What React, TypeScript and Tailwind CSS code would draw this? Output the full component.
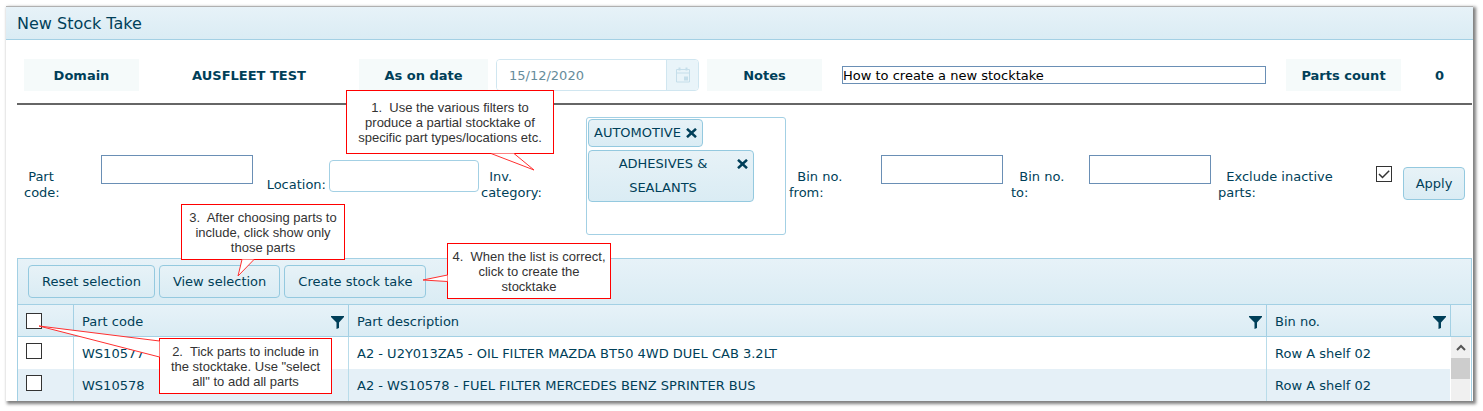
import React, { useState } from 'react';

interface Part {
  code: string;
  description: string;
  bin: string;
}

const parts: Part[] = [
  { code: 'WS10577', description: 'A2 - U2Y013ZA5 - OIL FILTER MAZDA BT50 4WD DUEL CAB 3.2LT', bin: 'Row A shelf 02' },
  { code: 'WS10578', description: 'A2 - WS10578 - FUEL FILTER MERCEDES BENZ SPRINTER BUS', bin: 'Row A shelf 02' },
];

const FilterIcon: React.FC = () => (
  <svg className="w-[13px] h-[13px] shrink-0" viewBox="0 0 13 13" fill="#003f59">
    <path d="M0 0h13v1L8 6.5V12L5.500 13V6.500L0 1z" />
  </svg>
);

const CrossIcon: React.FC = () => (
  <svg className="w-[11px] h-[10px]" viewBox="0 0 11 10" fill="none" stroke="#003f59" strokeWidth="2.500">
    <path d="M1 .8l9 8.400M10 .8L1 9.200" />
  </svg>
);

const CalendarIcon: React.FC = () => (
  <svg className="w-4 h-4" viewBox="0 0 16 16" fill="none" stroke="#c5deea">
    <path d="M1.500 2.500h13v12.500h-13zM1.500 6h13" />
    <path d="M4.500 .5v3M11.500 .5v3" strokeWidth="2" />
    <path d="M9 9.500h4v4H9z" fill="#c5deea" stroke="none" />
  </svg>
);

const Checkbox: React.FC<{ id: string; label?: string; initial?: boolean }> = ({ id, label, initial = false }) => {
  const [checked, setChecked] = useState(initial);
  return (
    <span className="relative block w-4 h-4">
      <input
        id={id}
        type="checkbox"
        aria-label={label}
        checked={checked}
        onChange={(e) => setChecked(e.target.checked)}
        className="block appearance-none w-4 h-4 bg-white border border-[#333333]"
      />
      {checked && (
        <svg className="absolute inset-0 w-4 h-4 pointer-events-none" viewBox="0 0 16 16" fill="none" stroke="#333333" strokeWidth="1.500">
          <path d="M3 8l3.500 3.500L13.200 4.800" />
        </svg>
      )}
    </span>
  );
};

const buttonStyle =
  'h-[33px] whitespace-nowrap border border-[#94c9df] rounded bg-linear-to-b from-[#e7f2f7] to-[#daecf4] hover:to-[#c4e0ed]';

const ToolButton: React.FC<{ children: React.ReactNode }> = ({ children }) => (
  <button className={`${buttonStyle} px-[13px]`}>{children}</button>
);

const Callout: React.FC<{ className: string; tail: string; children: React.ReactNode }> = ({ className, tail, children }) => (
  <div className={`absolute flex items-center justify-center border border-[#ff0000] bg-white font-['Liberation_Sans',sans-serif] text-[13px] leading-[15px] text-center whitespace-nowrap text-[#333333] ${className}`}>
    <svg className="absolute -left-px -top-px w-1 h-1 overflow-visible" fill="white" stroke="#ff3030" strokeWidth="1">
      <path d={tail} />
    </svg>
    <p className="relative">{children}</p>
  </div>
);

const headLabel = 'flex items-center justify-center h-8 pt-0.5 bg-[#f5fafa] font-bold whitespace-nowrap';
const filterLabel = 'mt-[52px] leading-4';
const plainInput = 'mt-[38px] w-full min-w-0 h-[29px] px-1 border border-[#6a8fb5] bg-white';
const headCell = 'h-8 px-2 border-b border-l border-[#a3d0e4] font-normal text-left';
const bodyCell = 'h-8 px-2 pt-0.5 border-l border-[#b9dcea]';

const App: React.FC = () => {
  const [notes, setNotes] = useState('How to create a new stocktake');
  const [categories, setCategories] = useState(['AUTOMOTIVE', 'ADHESIVES & SEALANTS']);

  return (
    <div className="relative bg-white pt-1.5 pl-1.5 pr-[10px] pb-[10px] font-['DejaVu_Sans',sans-serif] text-[13px] text-[#003f59]">
      <main className="border-t border-[#b0b0b0] bg-white shadow-[2px_2px_3px_1px_rgba(0,0,0,0.5)]">
        <h1 className="h-[33px] pt-0.5 px-[11px] flex items-center text-base border-b border-[#a3d0e4] bg-linear-to-b from-[#e7f2f8] to-[#daecf4]">
          New Stock Take
        </h1>

        <div className="pl-[11px] pr-px pt-[19px]">
          <section className="pl-[7px] pb-3 border-b-2 border-[#666666] grid grid-cols-[115fr_220fr_129fr_219fr_115fr_464fr_115fr_71fr] items-center">
            <div className={headLabel}>Domain</div>
            <div className="pt-0.5 text-center font-bold">AUSFLEET TEST</div>
            <label htmlFor="as-on" className={headLabel}>As on date</label>
            <div className="mx-2 h-8 flex border border-[#d0e6f0] rounded overflow-hidden">
              <input id="as-on" className="flex-1 min-w-0 px-3 pt-0.5 text-[#668c9b] bg-white" defaultValue="15/12/2020" disabled />
              <button aria-label="Open calendar" disabled className="w-8 flex items-center justify-center border-l border-[#d0e6f0] bg-[#e9f4f9]">
                <CalendarIcon />
              </button>
            </div>
            <label htmlFor="notes" className={headLabel}>Notes</label>
            <input
              id="notes"
              value={notes}
              onChange={(e) => setNotes(e.target.value)}
              className="mx-5 min-w-0 h-[18px] pt-px border border-[#6a8fb5] text-black"
            />
            <div className={headLabel}>Parts count</div>
            <div className="pl-1.5 pt-0.5 text-center font-bold">0</div>
          </section>

          <section className="pt-3 pl-[7px] pr-[7px] pb-[23px] grid grid-cols-[77fr_152fr_76fr_150fr_107fr_200fr_95fr_122fr_86fr_122fr_165fr_27fr_62fr] items-start">
            <label htmlFor="part-code" className={filterLabel}>&nbsp;Part<br />code:</label>
            <input id="part-code" className={plainInput} />
            <label htmlFor="location" className="mt-[60px] pr-[3px] leading-4 text-right">Location:</label>
            <input id="location" className="mt-[43px] w-full min-w-0 h-8 px-2 border border-[#a3d0e4] rounded bg-white" />
            <div className={`${filterLabel} pl-0.5`}>&nbsp; Inv.<br />category:</div>
            <div className="h-[118px] p-px border border-[#a3d0e4] rounded-[3px] flex flex-col items-start gap-[3px]">
              {categories.map((name) => (
                <span key={name} className="max-w-[166px] px-[5px] py-px flex items-start border border-[#94c9df] rounded bg-linear-to-b from-[#e7f2f7] to-[#daecf4] leading-6 text-center">
                  {name}
                  <button
                    aria-label={`Remove ${name}`}
                    className="h-6 pl-[5px] flex items-center"
                    onClick={() => setCategories(categories.filter((c) => c !== name))}
                  >
                    <CrossIcon />
                  </button>
                </span>
              ))}
            </div>
            <label htmlFor="bin-from" className={`${filterLabel} pl-[3px]`}>&nbsp; Bin no.<br />from:</label>
            <input id="bin-from" className={plainInput} />
            <label htmlFor="bin-to" className={`${filterLabel} pl-2`}>&nbsp; Bin no.<br />to:</label>
            <input id="bin-to" className={plainInput} />
            <label htmlFor="inactive" className={`${filterLabel} pl-[7px]`}>&nbsp; Exclude inactive<br />parts:</label>
            <div className="mt-[49px]"><Checkbox id="inactive" initial /></div>
            <button className={`${buttonStyle} mt-[50px] w-full`}>Apply</button>
          </section>

          <section className="border border-b-0 border-[#a3d0e4]">
            <div className="h-[46px] pl-[10px] flex items-center gap-1 border-b border-[#a3d0e4] bg-linear-to-b from-[#e7f2f8] to-[#daecf4]">
              <ToolButton>Reset selection</ToolButton>
              <ToolButton>View selection</ToolButton>
              <ToolButton>Create stock take</ToolButton>
            </div>
            <div className="flex">
              <table className="flex-1 table-fixed border-separate border-spacing-0">
                <colgroup>
                  <col className="w-[55px]" />
                  <col className="w-[275px]" />
                  <col />
                  <col className="w-[184px]" />
                </colgroup>
                <thead>
                  <tr className="bg-linear-to-b from-[#e7f2f8] to-[#daecf4]">
                    <th className="h-8 px-2 border-b border-[#a3d0e4]"><Checkbox id="all" label="Select all" /></th>
                    {['Part code', 'Part description', 'Bin no.'].map((title) => (
                      <th key={title} className={headCell}>
                        <span className="-mr-1 pt-[3px] flex items-center justify-between">{title}<FilterIcon /></span>
                      </th>
                    ))}
                  </tr>
                </thead>
                <tbody>
                  {parts.map((part) => (
                    <tr key={part.code} className="even:bg-[#e5f0f7]">
                      <td className="h-8 px-2 pb-1"><Checkbox id={part.code} label={`Select ${part.code}`} /></td>
                      <td className={bodyCell}>{part.code}</td>
                      <td className={bodyCell}>{part.description}</td>
                      <td className={bodyCell}>{part.bin}</td>
                    </tr>
                  ))}
                </tbody>
              </table>
              <div className="w-[21px] flex flex-col">
                <div className="h-8 shrink-0 border-b border-l border-[#a3d0e4] bg-linear-to-b from-[#e7f2f8] to-[#daecf4]" />
                <div className="ml-px mr-px flex-1 bg-[#f0f0f0]">
                  <div className="h-[21px] flex items-center justify-center">
                    <svg className="w-[10px] h-[7px]" viewBox="0 0 10 7" fill="none" stroke="#555555" strokeWidth="2">
                      <path d="M1 6l4-4 4 4" />
                    </svg>
                  </div>
                  <div className="h-[21px] bg-[#cdcdcd]" />
                </div>
              </div>
            </div>
          </section>
        </div>
      </main>

      <Callout className="left-[346px] top-[90px] w-[208px] h-16" tail="M145 63.500L188 80 168 63.500">
        1.&nbsp; Use the various filters to<br />produce a partial stocktake of<br />specific part types/locations etc.
      </Callout>
      <Callout className="left-[159px] top-[338px] w-[173px] h-14" tail="M.5 3L-120-12 .5 19">
        2.&nbsp; Tick parts to include in<br />the stocktake. Use "select<br />all" to add all parts
      </Callout>
      <Callout className="left-[181px] top-[204px] w-[164px] h-14" tail="M61 55.500L57 72 73 55.500">
        3.&nbsp; After choosing parts to<br />include, click show only<br />those parts
      </Callout>
      <Callout className="left-[447px] top-[243px] w-[164px] h-14" tail="M.5 32L-24 37 .5 38.500">
        4.&nbsp; When the list is correct,<br />click to create the<br />stocktake
      </Callout>
    </div>
  );
};

export default App;
